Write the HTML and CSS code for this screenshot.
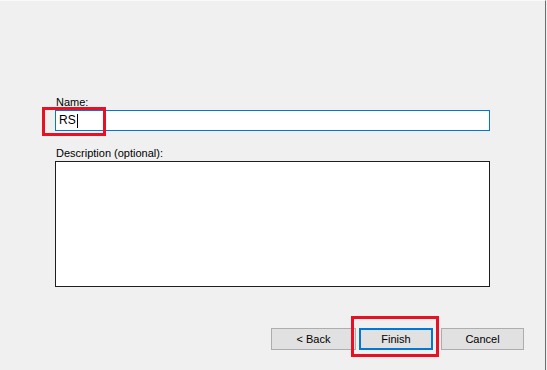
FILE: index.html
```html
<!DOCTYPE html>
<html>
<head>
<meta charset="utf-8">
<link rel="stylesheet" href="styles.css">
</head>
<body>
<div class="window">
  <div class="form">
    <div class="label">Name:</div>
    <div class="input focused"><span class="value">RS</span><span class="caret"></span></div>
    <div class="label desc-label">Description (optional):</div>
    <div class="textarea"></div>
  </div>
  <div class="buttons">
    <div class="btn back">&lt; Back</div>
    <div class="btn finish">Finish</div>
    <div class="btn cancel">Cancel</div>
  </div>
  <div class="mark mark-name"></div>
  <div class="mark mark-finish"></div>
</div>
</body>
</html>
```
FILE: styles.css
```css
html, body {
  margin: 0;
  padding: 0;
  background: #f0f0f0;
}
.window {
  position: relative;
  width: 545px;
  height: 369px;
  background: #f0f0f0;
  border-top: 1px solid #fafafa;
  border-right: 1px solid #6d6d6d;
  font-family: "Liberation Sans", Arial, sans-serif;
  font-size: 11px;
  color: #000;
}
.form {
  display: flex;
  flex-direction: column;
  padding: 94px 0 0 55px;
  width: 435px;
}
.label {
  height: 15px;
  line-height: 15px;
  padding-left: 1px;
}
.input {
  display: flex;
  align-items: center;
  height: 19px;
  border: 1px solid #0078d7;
  background: #fff;
  padding-left: 3px;
  font-size: 12px;
}
.value {
  line-height: 15px;
}
.caret {
  width: 1px;
  height: 14px;
  background: #000;
  margin-left: 1px;
}
.desc-label {
  margin-top: 15px;
}
.textarea {
  height: 124px;
  border: 1px solid #1e1e1e;
  background: #fff;
}
.buttons {
  display: flex;
  justify-content: flex-end;
  gap: 3px;
  padding-right: 21px;
  margin-top: 41px;
}
.btn {
  box-sizing: border-box;
  height: 22px;
  line-height: 20px;
  text-align: center;
  background: #e1e1e1;
  border: 1px solid #adadad;
}
.back { width: 85px; }
.finish {
  width: 74px;
  border: 2px solid #0078d7;
  line-height: 18px;
  margin-right: 5px;
}
.cancel { width: 83px; }
.mark {
  position: absolute;
  border: 3px solid #e81123;
  box-sizing: border-box;
}
.mark-name {
  left: 42px;
  top: 106px;
  width: 64px;
  height: 29px;
}
.mark-finish {
  left: 351px;
  top: 315px;
  width: 88px;
  height: 41px;
}
```
